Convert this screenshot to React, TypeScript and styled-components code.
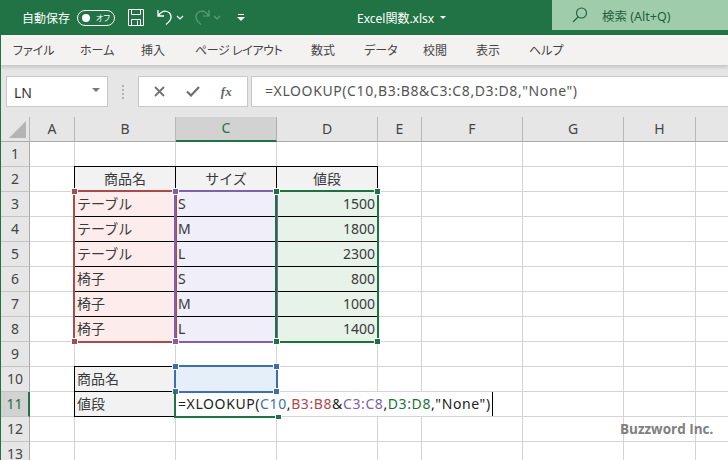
import React from 'react';
import styled, { createGlobalStyle } from 'styled-components';

const FONT = `"Noto Sans", "Noto Sans CJK JP", sans-serif`;
const SHEET_COLUMNS = '29px 45px 101px 101px 101px 44px 101px 101px 72px 33px';

const GlobalStyle = createGlobalStyle`
	html, body {
		margin: 0;
		padding: 0;
		background: #fff;
	}
	body {
		font-family: ${FONT};
		font-feature-settings: 'palt';
	}
`;

const Page = styled.div`
	width: 728px;
	height: 460px;
	overflow: hidden;
	position: relative;
	display: flex;
	flex-direction: column;
`;

const TitleBar = styled.div`
	height: 35px;
	flex: none;
	background: #217346;
	color: #fff;
	display: flex;
	align-items: flex-start;
	font-size: 12px;
`;

const QuickAccess = styled.div`
	width: 357px;
	height: 35px;
	flex: none;
	display: flex;
	align-items: center;
	padding-left: 22px;
	box-sizing: border-box;
`;

const AutoSaveLabel = styled.span`
	width: 55px;
	white-space: nowrap;
	font-size: 12px;
`;

const Toggle = styled.div`
	width: 38px;
	height: 16px;
	box-sizing: border-box;
	border: 1px solid #fff;
	border-radius: 8px;
	display: flex;
	align-items: center;
	padding-left: 4px;
	gap: 6px;
	font-size: 8px;
	white-space: nowrap;
	margin-right: 13px;
	i {
		width: 8px;
		height: 8px;
		border-radius: 50%;
		background: #fff;
		flex: none;
	}
`;

const Glyph = styled.svg<{ $gap?: number }>`
	flex: none;
	display: block;
	margin-right: ${(props) => props.$gap ?? 0}px;
`;

const DocTitle = styled.div`
	width: 195px;
	flex: none;
	height: 35px;
	display: flex;
	align-items: center;
	gap: 6px;
	font-size: 12px;
`;

const SearchBox = styled.div`
	flex: 1;
	height: 30px;
	background: #9fcdab;
	color: #1f5f3d;
	display: flex;
	align-items: center;
	padding-left: 20px;
	gap: 14px;
	font-size: 12.5px;
`;

const Ribbon = styled.div`
	height: 30px;
	flex: none;
	background: #f3f2f1;
	display: flex;
	align-items: center;
	font-size: 12px;
	color: #444;
	position: relative;
	z-index: 1;
	box-shadow: 0 2px 4px rgba(0, 0, 0, 0.16);
	border-left: 1px solid #217346;
	box-sizing: border-box;
`;

const Tab = styled.span<{ $w: number; $tight?: boolean }>`
	width: ${(props) => props.$w}px;
	flex: none;
	white-space: nowrap;
	letter-spacing: ${(props) => (props.$tight ? '-0.4px' : '0')};
	&:first-child {
		margin-left: 12px;
	}
`;

const FormulaBar = styled.div`
	height: 52px;
	flex: none;
	background: #e6e6e6;
	display: flex;
	align-items: flex-start;
	padding: 11px 0 0 6px;
	box-sizing: border-box;
	border-left: 1px solid #217346;
`;

const InputBox = styled.div`
	height: 31px;
	box-sizing: border-box;
	background: #fff;
	border: 1px solid #c8c8c8;
	display: flex;
	align-items: center;
	flex: none;
`;

const NameBox = styled(InputBox)`
	width: 102px;
	margin-left: -1px;
	padding: 2px 7px 0;
	justify-content: space-between;
	font-size: 14px;
	color: #333;
	span:last-child {
		width: 0;
		height: 0;
		border-left: 4px solid transparent;
		border-right: 4px solid transparent;
		border-top: 4px solid #777;
		margin-bottom: 6px;
	}
`;

const Dots = styled.div`
	width: 30px;
	flex: none;
	height: 31px;
	display: flex;
	flex-direction: column;
	align-items: center;
	justify-content: center;
	gap: 2px;
	i {
		width: 2px;
		height: 2px;
		background: #b4b4b4;
	}
`;

const ButtonBox = styled(InputBox)`
	width: 110px;
	margin-right: 3px;
	justify-content: space-around;
	padding: 0 5px;
	color: #707070;
`;

const FxLabel = styled.span`
	font-family: 'Liberation Serif', serif;
	font-style: italic;
	font-weight: 700;
	font-size: 13px;
	color: #666;
`;

const FormulaInput = styled(InputBox)`
	flex: 1;
	border-right: none;
	padding: 0 0 2px 13px;
	font-size: 14px;
	letter-spacing: 0.6px;
	color: #555;
	white-space: nowrap;
`;

const SheetStack = styled.div`
	flex: 1;
	display: grid;
	grid-template-columns: 1fr;
	grid-template-rows: 1fr;
	border-left: 1px solid #217346;
	min-height: 0;
`;

const CellGrid = styled.div`
	grid-area: 1 / 1;
	display: grid;
	grid-template-columns: ${SHEET_COLUMNS};
	grid-template-rows: repeat(14, 25px);
	font-size: 14px;
	color: #3a3a3a;
	font-feature-settings: normal;
`;

const OverlayGrid = styled(CellGrid)`
	pointer-events: none;
`;

const ColHead = styled.div<{ $on?: boolean }>`
	background: ${(props) => (props.$on ? '#d2d2d2' : '#e6e6e6')};
	color: ${(props) => (props.$on ? '#217346' : '#444')};
	border-right: 1px solid ${(props) => (props.$on ? '#b0b0b0' : '#b8b8b8')};
	border-bottom: ${(props) => (props.$on ? '2px solid #217346' : '1px solid #ababab')};
	box-sizing: border-box;
	display: flex;
	align-items: center;
	justify-content: center;
	padding-bottom: 2px;
	font-size: 14px;
`;

const Corner = styled(ColHead)`
	position: relative;
	&::after {
		content: '';
		position: absolute;
		right: 3px;
		bottom: 3px;
		width: 0;
		height: 0;
		border-left: 17px solid transparent;
		border-bottom: 17px solid #b4b4b4;
	}
`;

const RowHead = styled.div<{ $on?: boolean }>`
	background: ${(props) => (props.$on ? '#d2d2d2' : '#e6e6e6')};
	color: ${(props) => (props.$on ? '#217346' : '#444')};
	border-right: ${(props) => (props.$on ? '2px solid #217346' : '1px solid #ababab')};
	border-bottom: 1px solid #c4c4c4;
	box-sizing: border-box;
	display: flex;
	align-items: center;
	justify-content: center;
	padding-bottom: 2px;
	font-size: 14px;
`;

const Cell = styled.div<{ $fill?: string; $boxed?: boolean; $align?: string }>`
	box-sizing: border-box;
	background: ${(props) => props.$fill ?? '#fff'};
	border-right: 1px solid ${(props) => (props.$boxed ? '#000' : '#d4d4d4')};
	border-bottom: 1px solid ${(props) => (props.$boxed ? '#000' : '#d4d4d4')};
	display: flex;
	align-items: center;
	padding: 0 2px 2px 2px;
	white-space: nowrap;
	justify-content: ${(props) => props.$align ?? 'flex-start'};
`;

// black left and top edges of the bordered tables sit on the neighbouring gridlines
const TableFrame = styled.div<{ $area: string }>`
	grid-area: ${(props) => props.$area};
	margin: -1px 0 0 -1px;
	border-left: 1px solid #000;
	border-top: 1px solid #000;
`;

const Range = styled.div<{ $area: string; $color: string }>`
	grid-area: ${(props) => props.$area};
	margin: -2px -1px -1px -2px;
	border: 2px solid ${(props) => props.$color};
	position: relative;
	box-sizing: border-box;
`;

const Handle = styled.i<{ $color: string; $x: 'left' | 'right'; $y: 'top' | 'bottom' }>`
	position: absolute;
	width: 7px;
	height: 7px;
	box-sizing: border-box;
	background: ${(props) => props.$color};
	border: 1px solid #fff;
	${(props) => props.$x}: -4px;
	${(props) => props.$y}: -4px;
`;

const Editor = styled.div`
	grid-area: 12 / 4 / 13 / 9;
	justify-self: start;
	width: 318px;
	height: 24px;
	margin-left: -1px;
	box-sizing: border-box;
	background: #fff;
	padding: 0 0 2px 3px;
	display: flex;
	align-items: center;
	white-space: pre;
	font-size: 14px;
	letter-spacing: 0.6px;
	color: #222;
	border-right: 1px solid #000;
`;

const Ref = styled.span<{ $color: string }>`
	color: ${(props) => props.$color};
`;

const ActiveCell = styled.div`
	grid-area: 12 / 4 / 13 / 5;
	margin: -1px -1px -1px -2px;
	border-left: 2px solid #217346;
	border-bottom: 2px solid #217346;
	position: relative;
`;

const ActiveHandle = styled.i`
	position: absolute;
	right: -4px;
	bottom: -4px;
	width: 7px;
	height: 6px;
	background: #217346;
	border: 1px solid #fff;
	box-sizing: border-box;
`;

const Watermark = styled.div`
	position: absolute;
	left: 620px;
	top: 420px;
	font-family: 'Open Sans', sans-serif;
	font-weight: 700;
	font-size: 13.5px;
	color: #808080;
`;

const COLS = ['A', 'B', 'C', 'D', 'E', 'F', 'G', 'H', ''];
const TABS: [string, number][] = [
	['ファイル', 67],
	['ホーム', 61],
	['挿入', 54],
	['ページ レイアウト', 116],
	['数式', 53],
	['データ', 59],
	['校閲', 53],
	['表示', 53],
	['ヘルプ', 40],
];

const RED = '#a94a4d';
const PURPLE = '#8060ab';
const GREEN = '#1b7340';
const BLUE = '#3d6fb0';

type CellData = { text?: string; fill?: string; boxed?: boolean; align?: string };

const tableRows = [
	['テーブル', 'S', '1500'],
	['テーブル', 'M', '1800'],
	['テーブル', 'L', '2300'],
	['椅子', 'S', '800'],
	['椅子', 'M', '1000'],
	['椅子', 'L', '1400'],
];

const cellAt = (row: number, col: number): CellData => {
	if (row === 2 && col >= 1 && col <= 3) {
		return { text: ['商品名', 'サイズ', '値段'][col - 1], fill: '#f2f2f2', boxed: true, align: 'center' };
	}
	if (row >= 3 && row <= 8 && col >= 1 && col <= 3) {
		const fill = ['#fcedec', '#f0eef8', '#e7f2e9'][col - 1];
		return { text: tableRows[row - 3][col - 1], fill, boxed: true, align: col === 3 ? 'flex-end' : undefined };
	}
	if (row === 10 && col === 1) return { text: '商品名', fill: '#f2f2f2', boxed: true };
	if (row === 11 && col === 1) return { text: '値段', fill: '#f2f2f2', boxed: true };
	if (row === 10 && col === 2) return { fill: '#e6eef9' };
	return {};
};

const Corners = ({ color }: { color: string }) => (
	<>
		<Handle $color={color} $x="left" $y="top" />
		<Handle $color={color} $x="right" $y="top" />
		<Handle $color={color} $x="left" $y="bottom" />
		<Handle $color={color} $x="right" $y="bottom" />
	</>
);

const App = () => {
	const rows = Array.from({ length: 13 }, (_, i) => i + 1);
	return (
		<Page>
			<GlobalStyle />
			<TitleBar>
				<QuickAccess>
					<AutoSaveLabel>自動保存</AutoSaveLabel>
					<Toggle>
						<i />
						<span>オフ</span>
					</Toggle>
					<Glyph $gap={13} width="16" height="17" viewBox="0 0 16 17" fill="none" stroke="#fff" strokeWidth="1">
						<path d="M.5.5h15v16H.5z" />
						<path d="M3.5.5v5h9v-5M3.5 16.5v-6h9v6M9.5 11.5v5" />
					</Glyph>
					<Glyph $gap={3} width="16" height="17" viewBox="0 0 16 17" fill="none" stroke="#fff" strokeWidth="1.3">
						<path d="M1 1v6h6M1.5 6.5C4 3 7 1.5 10 2.5c3.5 1.2 5 4.5 3.5 8-1 2-2.5 3.5-4.5 5" />
					</Glyph>
					<Glyph $gap={10} width="8" height="5" viewBox="0 0 8 5" fill="none" stroke="#fff" strokeWidth="1.2">
						<path d="M1 1l3 3 3-3" />
					</Glyph>
					<Glyph $gap={3} width="16" height="17" viewBox="0 0 16 17" fill="none" stroke="#5f9d7b" strokeWidth="1.2">
						<path d="M15 1v6H9M14.5 6.5C12 3 9 1.5 6 2.5c-3.5 1.2-5 4.5-3.5 8 1 2 2.5 3.5 4.5 5" />
					</Glyph>
					<Glyph $gap={16} width="8" height="5" viewBox="0 0 8 5" fill="none" stroke="#5f9d7b" strokeWidth="1.2">
						<path d="M1 1l3 3 3-3" />
					</Glyph>
					<Glyph width="8" height="7" viewBox="0 0 8 7" fill="#fff">
						<path d="M1 0h6v1H1zM0 3h8L4 7z" />
					</Glyph>
				</QuickAccess>
				<DocTitle>
					<span>Excel関数.xlsx</span>
					<Glyph width="6" height="4" viewBox="0 0 6 4" fill="#fff">
						<path d="M0 0h6L3 3z" />
					</Glyph>
				</DocTitle>
				<SearchBox>
					<Glyph width="16" height="16" viewBox="0 0 16 16" fill="none" stroke="#1f5f3d" strokeWidth="1.1">
						<circle cx="9.5" cy="6" r="5" />
						<path d="M6 10l-5 5" />
					</Glyph>
					<span>検索 (Alt+Q)</span>
				</SearchBox>
			</TitleBar>
			<Ribbon>
				{TABS.map(([label, w]) => (
					<Tab key={label} $w={w} $tight={label.length > 6}>
						{label}
					</Tab>
				))}
			</Ribbon>
			<FormulaBar>
				<NameBox>
					<span>LN</span>
					<span />
				</NameBox>
				<Dots>
					<i />
					<i />
					<i />
					<i />
				</Dots>
				<ButtonBox>
					<Glyph width="11" height="11" viewBox="0 0 11 11" fill="none" stroke="#707070" strokeWidth="1.8">
						<path d="M1 1l9 9M10 1l-9 9" />
					</Glyph>
					<Glyph width="14" height="11" viewBox="0 0 14 11" fill="none" stroke="#707070" strokeWidth="2.2">
						<path d="M1 5.5l4 4 8-8.5" />
					</Glyph>
					<FxLabel>fx</FxLabel>
				</ButtonBox>
				<FormulaInput>=XLOOKUP(C10,B3:B8&amp;C3:C8,D3:D8,"None")</FormulaInput>
			</FormulaBar>
			<SheetStack>
				<CellGrid>
					<Corner />
					{COLS.map((c, i) => (
						<ColHead key={i} $on={c === 'C'}>
							{c}
						</ColHead>
					))}
					{rows.map((row) => (
						<React.Fragment key={row}>
							<RowHead $on={row === 11}>{row}</RowHead>
							{COLS.map((_, col) => {
								const data = cellAt(row, col);
								return (
									<Cell key={col} $fill={data.fill} $boxed={data.boxed} $align={data.align}>
										{data.text}
									</Cell>
								);
							})}
						</React.Fragment>
					))}
				</CellGrid>
				<OverlayGrid>
					<TableFrame $area="3 / 3 / 10 / 6" />
					<TableFrame $area="11 / 3 / 13 / 4" />
					<Range $area="4 / 3 / 10 / 4" $color={RED}>
						<Corners color={RED} />
					</Range>
					<Range $area="4 / 4 / 10 / 5" $color={PURPLE}>
						<Corners color={PURPLE} />
					</Range>
					<Range $area="4 / 5 / 10 / 6" $color={GREEN}>
						<Corners color={GREEN} />
					</Range>
					<Range $area="11 / 4 / 12 / 5" $color={BLUE}>
						<Corners color={BLUE} />
					</Range>
					<Editor>
						=XLOOKUP(<Ref $color={BLUE}>C10</Ref>,<Ref $color="#b3474f">B3:B8</Ref>&amp;<Ref $color={PURPLE}>C3:C8</Ref>,
						<Ref $color={GREEN}>D3:D8</Ref>,"None")
					</Editor>
					<ActiveCell>
						<ActiveHandle />
					</ActiveCell>
				</OverlayGrid>
			</SheetStack>
			<Watermark>Buzzword Inc.</Watermark>
		</Page>
	);
};

export default App;
